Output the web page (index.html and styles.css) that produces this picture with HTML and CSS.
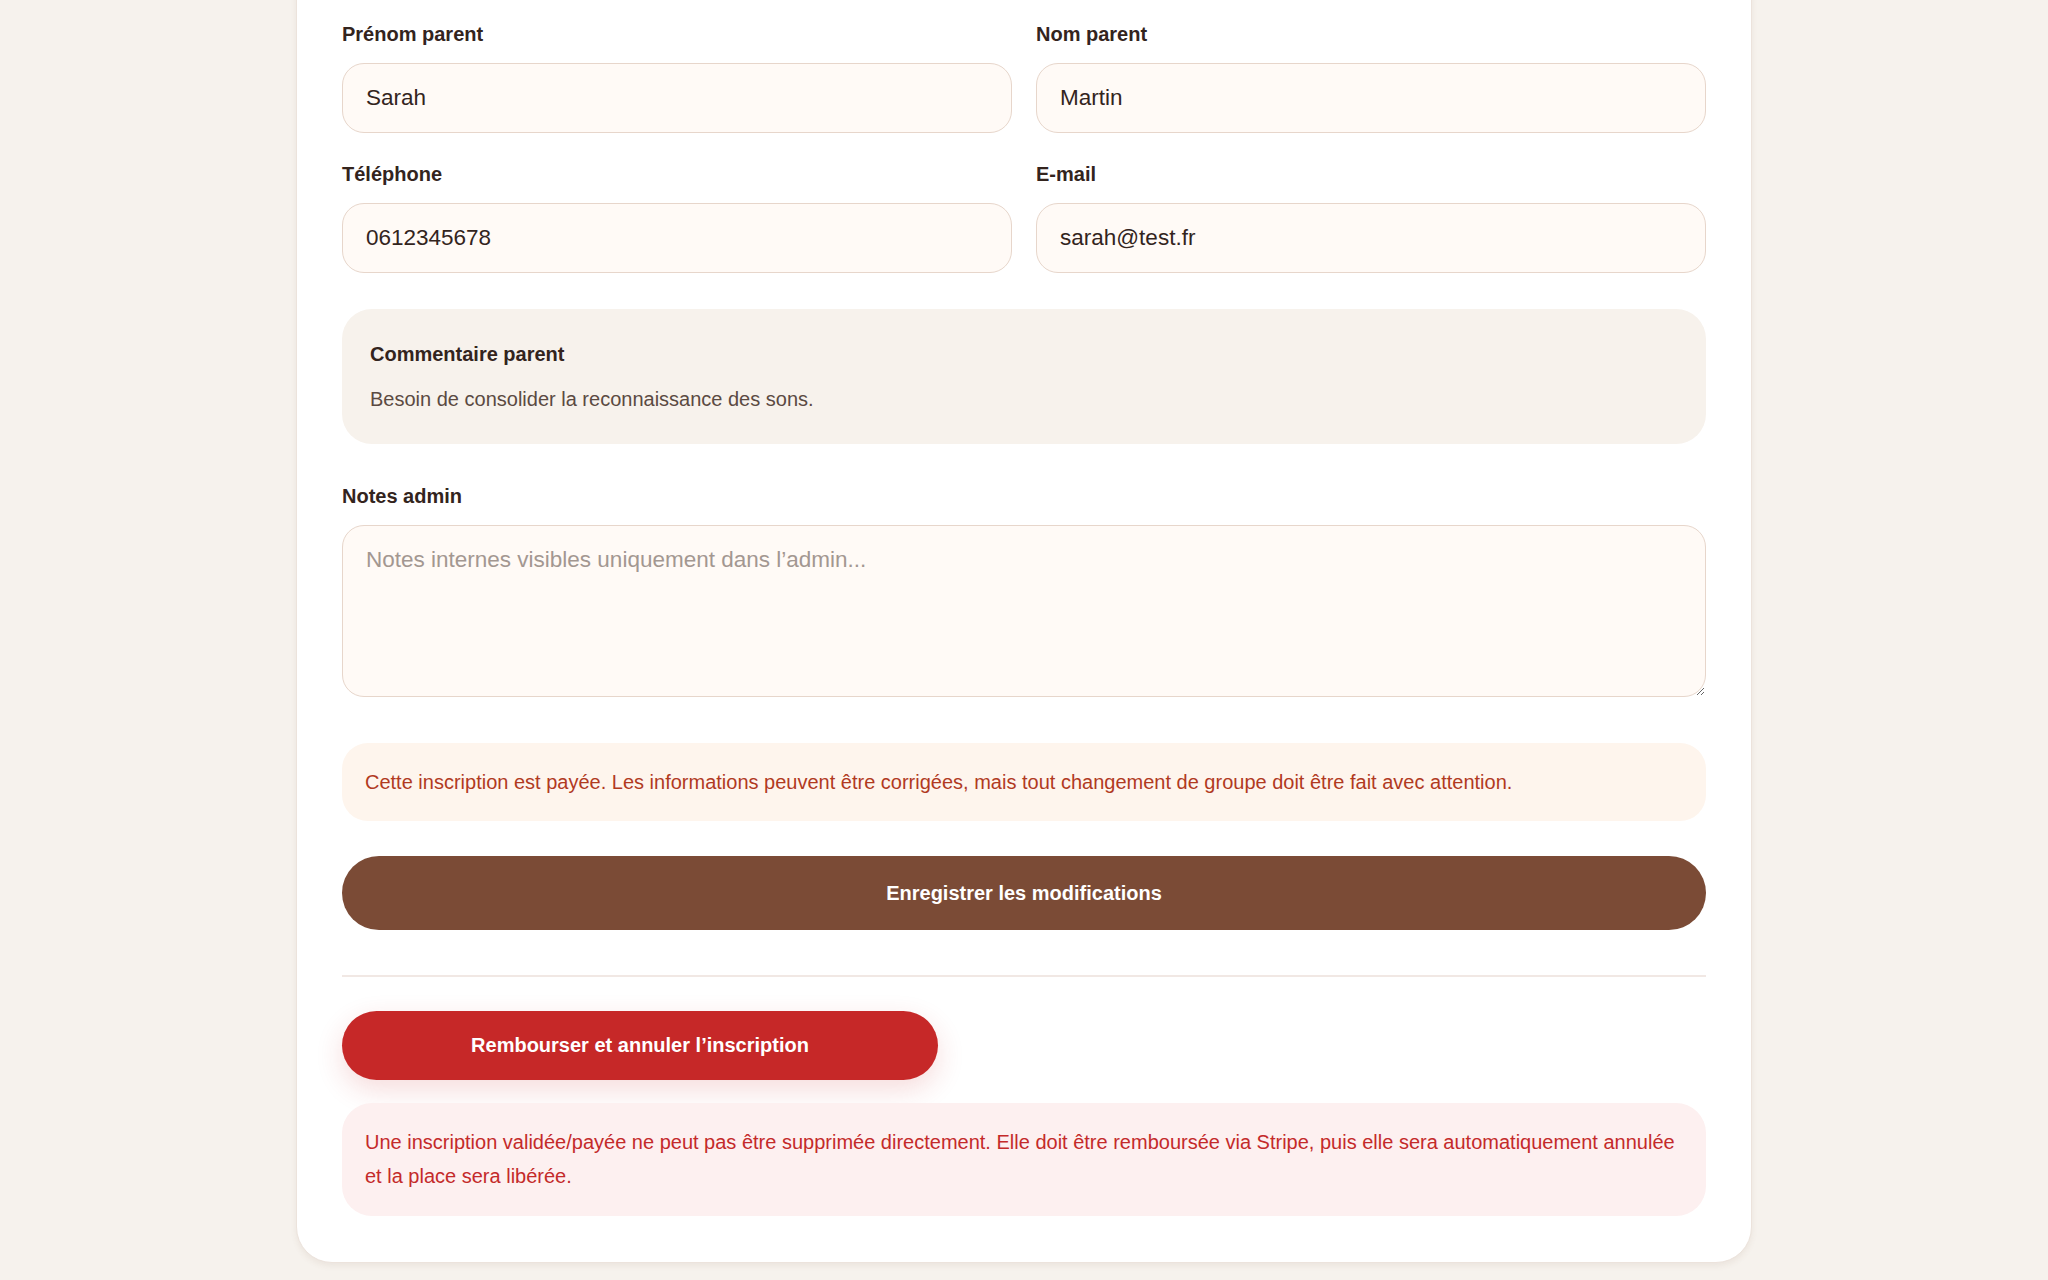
FILE: index.html
```html
<!DOCTYPE html>
<html lang="fr">
<head>
  <meta charset="UTF-8">
  <meta name="viewport" content="width=device-width, initial-scale=1.0">
  <title>Modifier l'inscription</title>
  <link rel="stylesheet" href="styles.css">
</head>
<body>
  <main class="edit">
    <form class="edit__card" action="">
      <div class="edit__grid">
        <div class="field">
          <label for="firstName">Prénom parent</label>
          <input type="text" id="firstName" name="firstName" value="Sarah">
        </div>
        <div class="field">
          <label for="lastName">Nom parent</label>
          <input type="text" id="lastName" name="lastName" value="Martin">
        </div>
        <div class="field">
          <label for="phone">Téléphone</label>
          <input type="tel" id="phone" name="phone" value="0612345678">
        </div>
        <div class="field">
          <label for="email">E-mail</label>
          <input type="email" id="email" name="email" value="sarah@test.fr">
        </div>
      </div>

      <div class="comment">
        <h3 class="comment__title">Commentaire parent</h3>
        <p class="comment__text">Besoin de consolider la reconnaissance des sons.</p>
      </div>

      <div class="field field--notes">
        <label for="notes">Notes admin</label>
        <textarea id="notes" name="notes" placeholder="Notes internes visibles uniquement dans l’admin..."></textarea>
      </div>

      <p class="notice">Cette inscription est payée. Les informations peuvent être corrigées, mais tout changement de groupe doit être fait avec attention.</p>

      <button type="submit" class="btn btn--save">Enregistrer les modifications</button>

      <hr class="edit__sep">

      <button type="button" class="btn btn--refund">Rembourser et annuler l’inscription</button>

      <p class="warning">Une inscription validée/payée ne peut pas être supprimée directement. Elle doit être remboursée via Stripe, puis elle sera automatiquement annulée et la place sera libérée.</p>
    </form>
  </main>
</body>
</html>
```

FILE: styles.css
```css
*,
*::before,
*::after {
  box-sizing: border-box;
}
body{
  margin: 0;
  padding: 0;
  background-color: #f6f2ed;
  font-family: 'Liberation Sans', Arial, Helvetica, sans-serif;
  color: #33241d;
}
.edit{
  padding-bottom: 18px;
}
.edit__card{
  width: 1456px;
  margin: -40px auto 0;
  padding: 62px 45px 46px;
  background-color: #fff;
  border: 1px solid #ece3dc;
  border-radius: 36px;
  box-shadow: 0 3px 6px rgba(120, 80, 50, 0.08);
}
.edit__grid{
  display: grid;
  grid-template-columns: 1fr 1fr;
  column-gap: 24px;
  row-gap: 30px;
}
.field label{
  display: block;
  font-size: 20px;
  line-height: 22px;
  font-weight: 700;
  color: #33241d;
  margin-bottom: 18px;
}
.field input,
.field textarea{
  display: block;
  width: 100%;
  font-family: inherit;
  font-size: 22.5px;
  color: #33241d;
  background-color: #fffaf6;
  border: 1.5px solid #e7d6cb;
  border-radius: 22px;
  outline: none;
}
.field input{
  height: 70px;
  padding: 0 23px;
}
.field textarea{
  height: 172px;
  padding: 18px 23px;
  line-height: 1.4;
}
.field textarea::placeholder{
  color: #a39791;
}
.comment{
  margin-top: 36px;
  padding: 34px 28px 33px;
  background-color: #f7f2ec;
  border-radius: 30px;
}
.comment__title{
  margin: 0 0 22px;
  font-size: 20px;
  line-height: 22px;
  font-weight: 700;
  color: #33241d;
}
.comment__text{
  margin: 0;
  font-size: 20px;
  line-height: 24px;
  color: #5b4a42;
}
.field--notes{
  margin-top: 41px;
}
.notice{
  margin: 46px 0 0;
  padding: 22px 23px;
  background-color: #fef5ed;
  border-radius: 26px;
  font-size: 20px;
  line-height: 34px;
  color: #b13a1f;
}
.btn{
  display: block;
  border: none;
  border-radius: 999px;
  font-family: inherit;
  font-size: 20px;
  font-weight: 700;
  color: #fff;
  cursor: pointer;
}
.btn--save{
  width: 100%;
  height: 74px;
  margin-top: 35px;
  background-color: #7b4b36;
}
.edit__sep{
  margin: 45px 0 0;
  border: none;
  border-top: 2px solid #f1e8e4;
}
.btn--refund{
  width: 596px;
  height: 69px;
  margin-top: 34px;
  background-color: #c62828;
  box-shadow: 0 10px 28px rgba(198, 40, 40, 0.16);
}
.warning{
  margin: 23px 0 0;
  padding: 22px 23px 23px;
  background-color: #fdf0f0;
  border-radius: 30px;
  font-size: 20px;
  line-height: 34px;
  color: #c42a2a;
}
```
